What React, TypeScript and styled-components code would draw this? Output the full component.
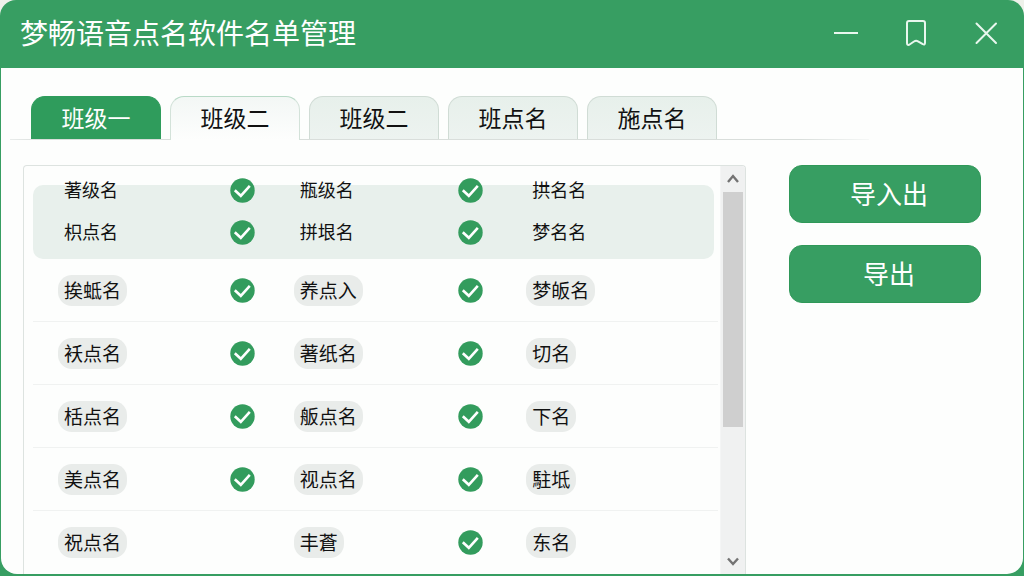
import React, { useState } from "react";
import styled, { createGlobalStyle, css } from "styled-components";

const GlobalStyle = createGlobalStyle`
  * { box-sizing: border-box; }
  html { background: #eef1ea; }
  body {
    margin: 0;
    font-family: "Noto Sans CJK SC", "Noto Sans", sans-serif;
    color: #111;
  }
  button { font-family: inherit; cursor: pointer; }
`;

const Frame = styled.div`
  display: flex;
  flex-direction: column;
  height: 100vh;
  padding: 0 1px 2px;
  background: #379e62;
  border-radius: 16px 16px 0 0;
`;

const TitleBar = styled.header`
  display: flex;
  flex: none;
  align-items: center;
  justify-content: space-between;
  height: 68px;
  padding: 0 19px 0 19px;
`;

const Title = styled.h1`
  margin: 0;
  padding-bottom: 4px;
  color: #fff;
  font-size: 28px;
  line-height: 40px;
  font-weight: 400;
`;

const WindowControls = styled.div`
  display: flex;
  gap: 34px;
`;

const ControlButton = styled.button`
  display: grid;
  place-items: center;
  width: 36px;
  height: 36px;
  padding: 0;
  border: 0;
  background: none;
  color: #e9f7ee;
`;

const Body = styled.main`
  display: flex;
  flex: 1;
  flex-direction: column;
  min-height: 0;
  padding-top: 28px;
  background: #fdfefd;
  border-radius: 0 0 16px 16px;
`;

const TabBar = styled.div`
  display: flex;
  flex: none;
  gap: 9px;
  height: 44px;
  margin: 0 154px 0 9px;
  padding-left: 21px;
  background: linear-gradient(to right, #e9eceb, #d9dedb 4%, #d9dedb 92%, #f6f8f7) bottom / 100% 1px no-repeat;
`;

type TabKind = "primary" | "open" | "plain";

const tabLooks = {
  primary: css`
    background: #2f9c5c;
    border-color: #2f9c5c;
    color: #fff;
  `,
  open: css`
    margin-bottom: 0;
    padding-bottom: 4px;
    background: linear-gradient(#f3f7f5, #fdfefd);
    border-color: #b9dac7 #d3e2d9 #d3e2d9;
  `,
  plain: css`
    background: linear-gradient(#e7f0eb, #edf3f0);
    border-color: #d0dcd5;
  `,
};

const Tab = styled.button<{ $kind: TabKind }>`
  width: 130px;
  margin: 0 0 1px;
  padding: 0 0 2px;
  border: 1px solid;
  border-bottom: 0;
  border-radius: 14px 14px 0 0;
  color: #111;
  font-size: 23px;
  line-height: 34px;
  ${(p) => tabLooks[p.$kind]}
`;

const Content = styled.div`
  display: flex;
  flex: 1;
  gap: 43px;
  min-height: 0;
  padding: 25px 42px 0 22px;
`;

const ListPanel = styled.section`
  display: flex;
  flex: 1;
  min-width: 0;
  overflow: hidden;
  border: 1px solid #dde3e0;
  border-bottom: 0;
  border-radius: 4px 4px 0 0;
`;

const ListView = styled.div`
  flex: 1;
  min-width: 0;
  overflow: hidden;
  padding: 19px 2px 0 9px;
`;

const RosterTable = styled.table`
  display: block;
`;

const SelectedGroup = styled.tbody`
  display: flow-root;
  margin-right: 4px;
  padding-bottom: 6px;
  background: #e8f0ec;
  border-radius: 10px;
`;

const RowGroup = styled.tbody`
  display: block;
`;

const Row = styled.tr<{ $compact?: boolean }>`
  display: grid;
  grid-template-columns: 172fr 64fr 165fr 68fr 192fr;
  align-items: center;
  padding-left: 25px;
  ${(p) =>
    p.$compact
      ? css`
          height: 42px;
          margin-right: -4px;
          &:first-child { margin-top: -16px; }
        `
      : css`
          height: 63px;
          border-bottom: 1px solid #f0f2f1;
          &:last-child { border-bottom: 0; }
        `}
`;

const NameCell = styled.td`
  padding: 0;
  white-space: nowrap;
`;

const CheckCell = styled.td`
  display: flex;
  padding: 0;
`;

const PlainName = styled.span`
  display: block;
  padding: 0 0 2px 6px;
  font-size: 18px;
  line-height: 26px;
`;

const NamePill = styled.span`
  display: inline-block;
  padding: 0 6px 2px;
  border-radius: 14px;
  background: #e9ecea;
  font-size: 19px;
  line-height: 29px;
  vertical-align: top;
`;

const ScrollTrack = styled.div`
  display: flex;
  flex: none;
  flex-direction: column;
  width: 25px;
  padding: 0 2px;
  background: #f0f1f1;
  border-left: 1px solid #f4f5f5;
`;

const ScrollArrow = styled.button`
  display: grid;
  flex: none;
  place-items: center;
  height: 26px;
  padding: 0;
  border: 0;
  background: none;
  color: #737373;
`;

const ScrollLane = styled.div`
  flex: 1;
  min-height: 0;
`;

const ScrollThumb = styled.div`
  height: 66%;
  background: #cfcfcf;
`;

const Actions = styled.aside`
  display: flex;
  flex: none;
  flex-direction: column;
  gap: 22px;
  width: 192px;
`;

const ActionButton = styled.button`
  height: 58px;
  padding: 0 0 2px 8px;
  border: 1px solid #2f9858;
  border-radius: 13px;
  background: #379e62;
  color: #fff;
  font-size: 26px;
  line-height: 38px;
`;

const CheckMark = () => (
  <svg width="25" height="25" viewBox="0 0 25 25" role="img" aria-label="已选">
    <circle cx="12.5" cy="12.5" r="12.2" fill="#339c5d" />
    <path d="M4.8 12.2 10.8 17.8 19.8 7.8" fill="none" stroke="#fff" strokeWidth="2.6" />
  </svg>
);

const Chevron = ({ up = false }: { up?: boolean }) => (
  <svg width="14" height="10" viewBox="0 0 14 10" fill="none" stroke="currentColor" strokeWidth="2.4">
    <path d={up ? "M2 8 7 2 12 8" : "M2 2.5 7 8 12 2.5"} />
  </svg>
);

interface Entry {
  names: [string, string, string];
  checks: [boolean, boolean];
}

const selectedEntries: Entry[] = [
  { names: ["著级名", "瓶级名", "拱名名"], checks: [true, true] },
  { names: ["枳点名", "拼垠名", "梦名名"], checks: [true, true] },
];

const entries: Entry[] = [
  { names: ["挨蚳名", "养点入", "梦皈名"], checks: [true, true] },
  { names: ["袄点名", "著纸名", "切名"], checks: [true, true] },
  { names: ["栝点名", "舨点名", "下名"], checks: [true, true] },
  { names: ["美点名", "视点名", "駐坻"], checks: [true, true] },
  { names: ["祝点名", "丰蒼", "东名"], checks: [false, true] },
];

const tabs = ["班级一", "班级二", "班级二", "班点名", "施点名"];

const RosterRow = ({ entry, compact }: { entry: Entry; compact?: boolean }) => {
  const Name = compact ? PlainName : NamePill;
  return (
    <Row $compact={compact}>
      <NameCell><Name>{entry.names[0]}</Name></NameCell>
      <CheckCell>{entry.checks[0] && <CheckMark />}</CheckCell>
      <NameCell><Name>{entry.names[1]}</Name></NameCell>
      <CheckCell>{entry.checks[1] && <CheckMark />}</CheckCell>
      <NameCell><Name>{entry.names[2]}</Name></NameCell>
    </Row>
  );
};

export default function App() {
  const [open, setOpen] = useState(1);

  return (
    <>
      <GlobalStyle />
      <Frame>
        <TitleBar>
          <Title>梦畅语音点名软件名单管理</Title>
          <WindowControls>
            <ControlButton aria-label="最小化">
              <svg width="26" height="26" viewBox="0 0 26 26" fill="none" stroke="currentColor" strokeWidth="2">
                <path d="M1 12H25" />
              </svg>
            </ControlButton>
            <ControlButton aria-label="书签">
              <svg width="26" height="28" viewBox="0 0 26 28" fill="none" stroke="currentColor" strokeWidth="2" strokeLinejoin="round">
                <path d="M4 3Q4 1 6 1H20Q22 1 22 3V22.8Q22 25.2 19.8 24.2L15 21.3Q13 20.3 11 21.5L6.2 24.8Q4 25.4 4 23Z" />
              </svg>
            </ControlButton>
            <ControlButton aria-label="关闭">
              <svg width="26" height="26" viewBox="0 0 26 26" fill="none" stroke="currentColor" strokeWidth="2" strokeLinecap="round">
                <path d="M3.5 2.5 23 22M23 2.5 3.5 22" />
              </svg>
            </ControlButton>
          </WindowControls>
        </TitleBar>

        <Body>
          <TabBar role="tablist">
            {tabs.map((label, i) => (
              <Tab
                key={i}
                role="tab"
                aria-selected={open === i}
                $kind={i === 0 ? "primary" : open === i ? "open" : "plain"}
                onClick={() => setOpen(i)}
              >
                {label}
              </Tab>
            ))}
          </TabBar>

          <Content>
            <ListPanel>
              <ListView>
                <RosterTable>
                  <SelectedGroup>
                    {selectedEntries.map((e, i) => <RosterRow key={i} entry={e} compact />)}
                  </SelectedGroup>
                  <RowGroup>
                    {entries.map((e, i) => <RosterRow key={i} entry={e} />)}
                  </RowGroup>
                </RosterTable>
              </ListView>
              <ScrollTrack>
                <ScrollArrow aria-label="向上滚动"><Chevron up /></ScrollArrow>
                <ScrollLane><ScrollThumb /></ScrollLane>
                <ScrollArrow aria-label="向下滚动"><Chevron /></ScrollArrow>
              </ScrollTrack>
            </ListPanel>

            <Actions>
              <ActionButton>导入出</ActionButton>
              <ActionButton>导出</ActionButton>
            </Actions>
          </Content>
        </Body>
      </Frame>
    </>
  );
}
